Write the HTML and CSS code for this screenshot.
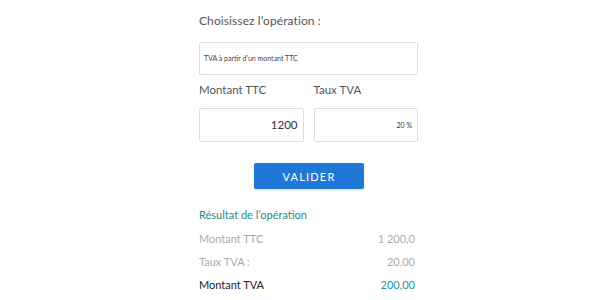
FILE: index.html
```html
<!DOCTYPE html>
<html lang="fr">
<head>
<meta charset="utf-8">
<link rel="stylesheet" href="styles.css">
</head>
<body>
<div class="form">
  <div class="title">Choisissez l’opération :</div>
  <div class="select">TVA à partir d’un montant TTC</div>
  <div class="fields">
    <div class="field">
      <div class="label">Montant TTC</div>
      <div class="input big">1200</div>
    </div>
    <div class="field">
      <div class="label">Taux TVA</div>
      <div class="input small">20 %</div>
    </div>
  </div>
  <div class="actions"><button class="btn">VALIDER</button></div>
  <div class="result-title">Résultat de l’opération</div>
  <div class="rows">
    <div class="row muted"><span>Montant TTC</span><span>1 200,0</span></div>
    <div class="row muted"><span>Taux TVA :</span><span>20,00</span></div>
    <div class="row strong"><span>Montant TVA</span><span class="accent">200,00</span></div>
  </div>
</div>
</body>
</html>
```
FILE: styles.css
```css
html, body { margin: 0; padding: 0; background: #fff; }
body { font-family: "Lato", "Noto Sans", sans-serif; color: #333; }
.form { width: 219px; margin-left: 199px; padding-top: 13px; }
.title { font-size: 12px; color: #555; height: 16px; line-height: 16px; letter-spacing: 0.1px; }
.select { margin-top: 13px; height: 31px; border: 1px solid #ddd; border-radius: 2px; font-size: 7px; line-height: 31px; padding-left: 4px; color: #444; }
.fields { display: flex; gap: 10px; margin-top: 7px; }
.field { flex: 1; }
.label { font-size: 11.5px; color: #555; height: 16px; line-height: 16px; }
.input { margin-top: 10px; height: 32px; border: 1px solid #ddd; border-radius: 2px; text-align: right; padding-right: 5px; line-height: 32px; color: #333; }
.input.big { font-size: 11.5px; }
.input.small { font-size: 7px; }
.actions { display: flex; justify-content: center; margin-top: 21px; padding-left: 1px; }
.btn { width: 110px; height: 26px; border: none; border-radius: 2px; background: #1f77d6; color: #fff; font-family: inherit; font-size: 11px; letter-spacing: 1.2px; box-shadow: 0 1px 2px rgba(0,0,0,0.15); }
.result-title { margin-top: 19px; color: #1f8a8f; font-size: 11px; height: 14px; line-height: 14px; }
.rows { margin-top: 5px; }
.row { display: flex; justify-content: space-between; font-size: 11px; height: 23px; line-height: 23px; padding-right: 3px; }
.muted { color: #aaa; }
.strong { color: #222; }
.accent { color: #1a9aa0; }
```
